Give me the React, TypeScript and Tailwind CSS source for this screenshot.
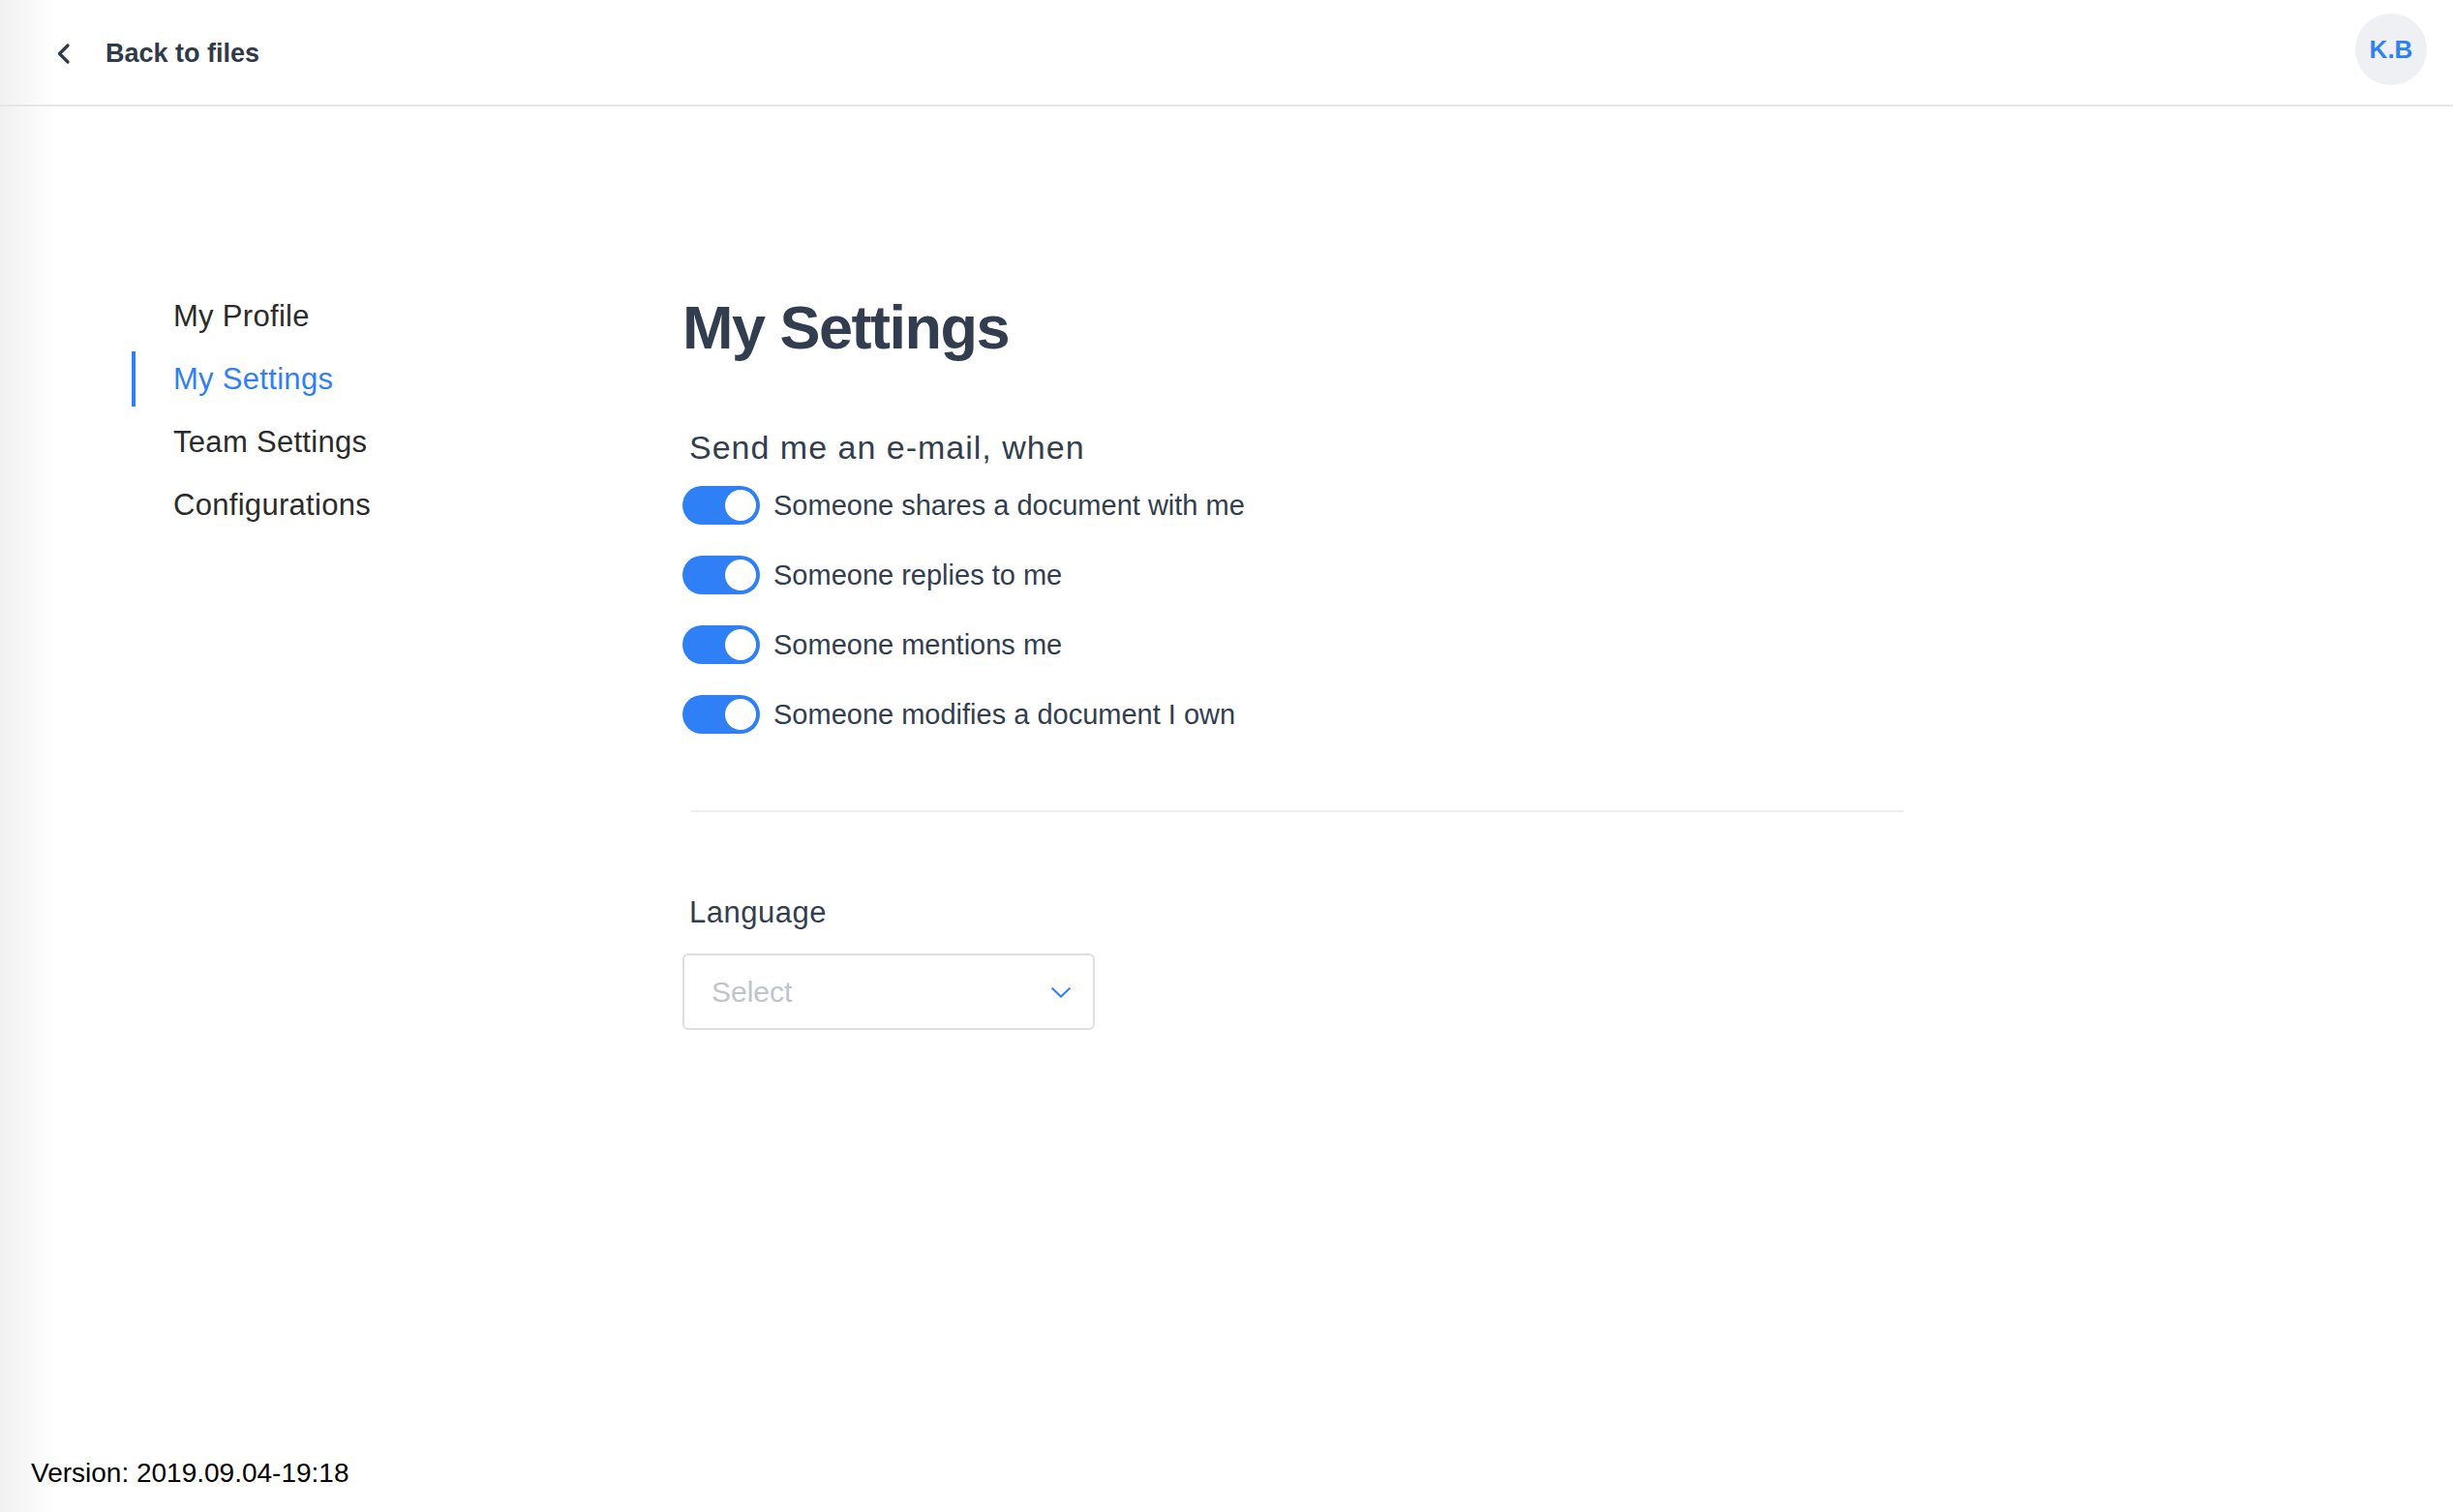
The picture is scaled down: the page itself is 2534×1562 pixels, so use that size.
import { useState } from 'react';

const navItems = ['My Profile', 'My Settings', 'Team Settings', 'Configurations'];

const notifications = [
  'Someone shares a document with me',
  'Someone replies to me',
  'Someone mentions me',
  'Someone modifies a document I own',
];

const Toggle = ({ on, onClick }: { on: boolean; onClick: () => void }) => (
  <button
    onClick={onClick}
    className={`relative h-[40px] w-[80px] shrink-0 rounded-full transition-colors ${
      on ? 'bg-[#2f80f6]' : 'bg-[#dcdfe6]'
    }`}
  >
    <span
      className={`absolute top-[4px] h-[32px] w-[32px] rounded-full bg-white transition-all ${
        on ? 'left-[44px]' : 'left-[4px]'
      }`}
    />
  </button>
);

const App = () => {
  const [active, setActive] = useState('My Settings');
  const [toggles, setToggles] = useState([true, true, true, true]);

  const flip = (i: number) => {
    setToggles(toggles.map((t, j) => (j === i ? !t : t)));
  };

  return (
    <div className="flex h-screen w-full flex-col bg-[linear-gradient(90deg,#f1f1f1_0px,#ffffff_60px)] font-['Liberation_Sans',Arial,sans-serif]">
      {/* Header */}
      <header className="flex h-[110px] shrink-0 items-center justify-between border-b-2 border-[#e6e6e6] pl-[57px] pr-[27px]">
        <a href="#" className="flex items-center gap-[36px] pt-[3px]">
          <svg width="16" height="21" viewBox="0 0 16 21" fill="none">
            <polyline
              points="13,2 4.5,10.5 13,19"
              stroke="#2f3a4a"
              strokeWidth="3.2"
              strokeLinecap="round"
              strokeLinejoin="round"
            />
          </svg>
          <span className="text-[27px] font-bold leading-none text-[#2f3a4a]">Back to files</span>
        </a>
        <div className="mb-[6px] flex h-[74px] w-[74px] items-center justify-center rounded-full bg-[#eff0f3] text-[26px] font-bold text-[#2f80f6]">
          K.B
        </div>
      </header>

      <div className="flex flex-1">
        {/* Sidebar */}
        <aside className="w-[705px] shrink-0 pl-[136px] pt-[188px]">
          <nav className="flex flex-col gap-[8px]">
            {navItems.map((item) => (
              <a
                key={item}
                href="#"
                onClick={() => setActive(item)}
                className={`flex h-[57px] items-center border-l-4 pl-[39px] text-[31px] leading-none tracking-[0.3px] ${
                  active === item
                    ? 'border-[#2f80f6] text-[#2f80f6]'
                    : 'border-transparent text-[#2b2b2b]'
                }`}
              >
                {item}
              </a>
            ))}
          </nav>
        </aside>

        {/* Main */}
        <main className="flex-1 pt-[197px]">
          <h1 className="text-[63px] font-bold leading-none tracking-[-1.5px] text-[#323e4f]">My Settings</h1>

          <p className="ml-[7px] mt-[75px] text-[34px] leading-none tracking-[1px] text-[#323e4f]">
            Send me an e-mail, when
          </p>
          <div className="mt-[23px] flex flex-col gap-[32px]">
            {notifications.map((label, i) => (
              <div key={label} className="flex items-center gap-[14px]">
                <Toggle on={toggles[i]} onClick={() => flip(i)} />
                <span className="text-[29px] leading-none text-[#323e4f]">{label}</span>
              </div>
            ))}
          </div>

          <div className="ml-[9px] mt-[79px] h-[2px] w-[1252px] bg-[#efefef]" />

          <p className="ml-[7px] mt-[88px] text-[31px] leading-none tracking-[0.5px] text-[#323e4f]">Language</p>
          <button className="mt-[27px] flex h-[79px] w-[426px] items-center justify-between rounded-[6px] border-2 border-[#dcdfe6] bg-white pl-[28px] pr-[22px]">
            <span className="text-[30px] leading-none text-[#c0c4cc]">Select</span>
            <svg width="22" height="12" viewBox="0 0 22 12" fill="none">
              <polyline points="1.5,1.5 11,10.5 20.5,1.5" stroke="#2f80f6" strokeWidth="2" />
            </svg>
          </button>
        </main>
      </div>

      {/* Footer */}
      <footer className="shrink-0 pb-[26px] pl-[32px] text-[28px] leading-none text-black">
        Version: 2019.09.04-19:18
      </footer>
    </div>
  );
};

export default App;
